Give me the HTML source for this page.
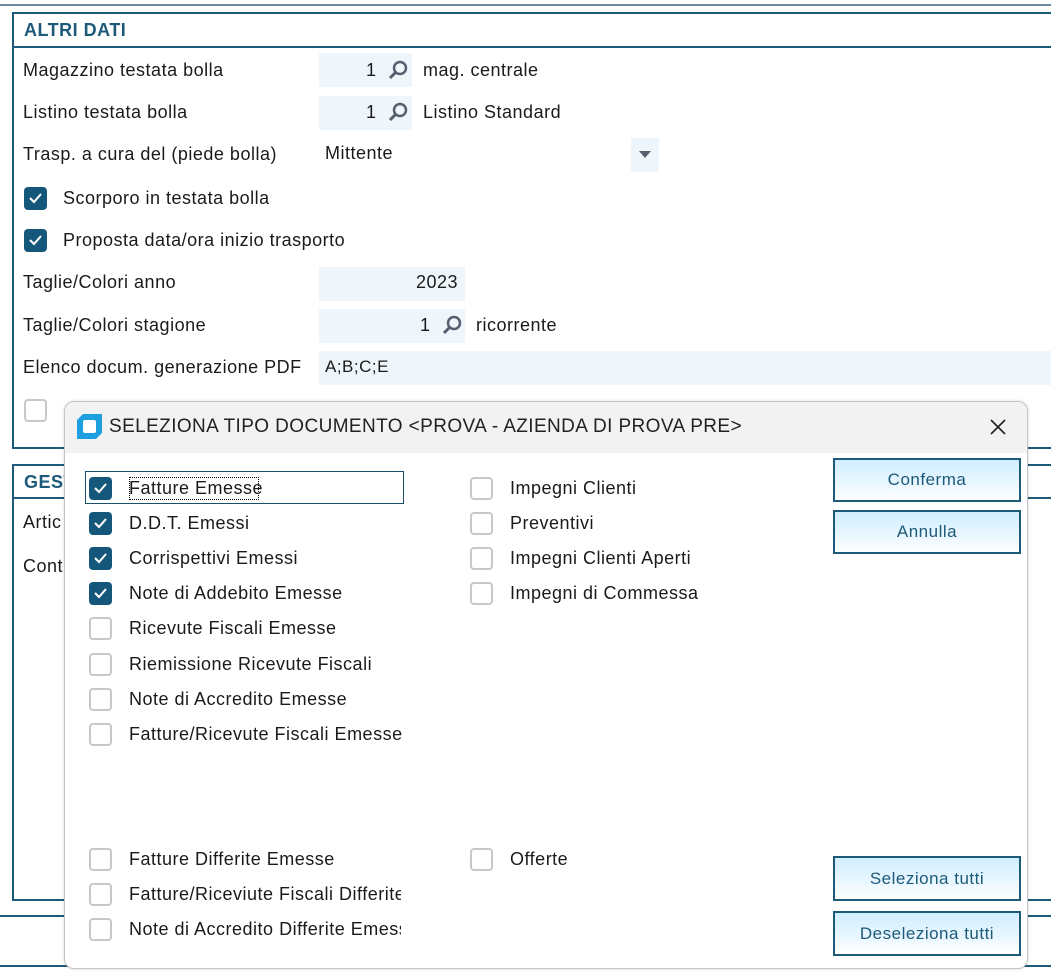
<!DOCTYPE html>
<html><head><meta charset="utf-8"><style>
*{box-sizing:border-box;margin:0;padding:0}
body{width:1051px;height:976px;background:#fff;font-family:"Liberation Sans","DejaVu Sans",sans-serif;font-size:18px;letter-spacing:0.5px;color:#1a1a1a;position:relative;overflow:hidden}
.a{position:absolute;white-space:nowrap}
.hl{position:absolute;height:2px;background:#1d5a7a}
.fld{position:absolute;background:#eef6fc}
.cb{position:absolute;width:23px;height:23px;border-radius:4px}
.on{background:#15577a}
.off{border:2px solid #c8c8c8;background:#fff}
.on svg{position:absolute;left:4px;top:5px}
.btn{position:absolute;left:833px;width:188px;border:2px solid #1d5a7a;background:linear-gradient(#cfeeff,#eaf7ff 60%,#fff);color:#1d5a7a;text-align:center;font-size:17px}
.mag{position:absolute}
</style></head><body>
<div class="a" style="left:0;top:4px;width:1051px;height:2px;background:#6d8aa3"></div>
<div class="a" style="left:12px;top:12px;width:1045px;height:437px;border:2px solid #1d5a7a"></div>
<div class="hl" style="left:12px;top:46px;width:1039px"></div>
<div class="a" style="left:24px;top:20px;font-weight:bold;color:#1d5a7a;font-size:18px">ALTRI DATI</div>
<div class="a" style="left:23px;top:60px">Magazzino testata bolla</div>
<div class="fld" style="left:319px;top:53px;width:93px;height:34px"></div>
<div class="a" style="left:366px;top:60px">1</div>
<svg class="mag" style="left:387px;top:60px" width="22" height="22" viewBox="0 0 22 22"><circle cx="13" cy="8" r="6" fill="none" stroke="#555f6d" stroke-width="2.5"/><path d="M8.5 12.5L3 18" stroke="#555f6d" stroke-width="3"/></svg>
<div class="a" style="left:423px;top:60px">mag. centrale</div>
<div class="a" style="left:23px;top:102px">Listino testata bolla</div>
<div class="fld" style="left:319px;top:96px;width:93px;height:34px"></div>
<div class="a" style="left:366px;top:102px">1</div>
<svg class="mag" style="left:387px;top:102px" width="22" height="22" viewBox="0 0 22 22"><circle cx="13" cy="8" r="6" fill="none" stroke="#555f6d" stroke-width="2.5"/><path d="M8.5 12.5L3 18" stroke="#555f6d" stroke-width="3"/></svg>
<div class="a" style="left:423px;top:102px">Listino Standard</div>
<div class="a" style="left:23px;top:144px">Trasp. a cura del (piede bolla)</div>
<div class="a" style="left:325px;top:143px">Mittente</div>
<div class="fld" style="left:631px;top:138px;width:28px;height:34px"></div>
<div class="a" style="left:639px;top:151px;width:0;height:0;border-left:6px solid transparent;border-right:6px solid transparent;border-top:7px solid #555f6d"></div>
<div class="cb on" style="left:24px;top:187px"><svg width="15" height="12"><path d="M2 6l4 4 7-8" fill="none" stroke="#fff" stroke-width="2"/></svg></div>
<div class="a" style="left:63px;top:188px">Scorporo in testata bolla</div>
<div class="cb on" style="left:24px;top:229px"><svg width="15" height="12"><path d="M2 6l4 4 7-8" fill="none" stroke="#fff" stroke-width="2"/></svg></div>
<div class="a" style="left:63px;top:230px">Proposta data/ora inizio trasporto</div>
<div class="a" style="left:23px;top:272px">Taglie/Colori anno</div>
<div class="fld" style="left:319px;top:267px;width:146px;height:34px"></div>
<div class="a" style="left:416px;top:272px">2023</div>
<div class="a" style="left:23px;top:315px">Taglie/Colori stagione</div>
<div class="fld" style="left:319px;top:309px;width:146px;height:34px"></div>
<div class="a" style="left:420px;top:315px">1</div>
<svg class="mag" style="left:441px;top:315px" width="22" height="22" viewBox="0 0 22 22"><circle cx="13" cy="8" r="6" fill="none" stroke="#555f6d" stroke-width="2.5"/><path d="M8.5 12.5L3 18" stroke="#555f6d" stroke-width="3"/></svg>
<div class="a" style="left:476px;top:315px">ricorrente</div>
<div class="a" style="left:23px;top:357px">Elenco docum. generazione PDF</div>
<div class="fld" style="left:319px;top:351px;width:732px;height:34px"></div>
<div class="a" style="left:325px;top:357px;font-size:17px">A;B;C;E</div>
<div class="cb off" style="left:24px;top:399px"></div>
<div class="a" style="left:12px;top:464px;width:1045px;height:437px;border:2px solid #1d5a7a"></div>
<div class="hl" style="left:12px;top:497px;width:1039px"></div>
<div class="a" style="left:24px;top:472px;font-weight:bold;color:#1d5a7a;font-size:18px">GEST</div>
<div class="a" style="left:23px;top:512px">Artic</div>
<div class="a" style="left:23px;top:556px">Cont</div>
<div class="hl" style="left:0;top:915px;width:1051px"></div>
<div class="hl" style="left:0;top:965px;width:1051px"></div>
<div class="a" style="left:64px;top:401px;width:964px;height:568px;border:1px solid #c4c4c4;border-radius:10px;background:#fff;overflow:hidden;box-shadow:0 0 3px rgba(0,0,0,.15)">
 <div style="height:51px;background:#f2f2f2"></div>
</div>
<svg class="a" style="left:76px;top:413px" width="27" height="27" viewBox="0 0 27 27"><path d="M7 1h19v19l-6 6H1V7z" fill="#1ea0e0"/><rect x="7" y="7" width="13" height="13" rx="2" fill="#fff"/></svg>
<div class="a" style="left:109px;top:416px;font-size:19px;letter-spacing:0.4px;color:#222">SELEZIONA TIPO DOCUMENTO &lt;PROVA - AZIENDA DI PROVA PRE&gt;</div>
<svg class="a" style="left:989px;top:418px" width="18" height="18"><path d="M2 2l14 14M16 2L2 16" stroke="#222" stroke-width="1.6"/></svg>
<div class="a" style="left:85px;top:471px;width:319px;height:33px;border:1.5px solid #1d4f6a"></div>
<div class="a" style="left:129px;top:477px;height:23px;border:1px dotted #000;width:130px"></div>

<div class="cb on" style="left:89px;top:477px"><svg width="15" height="12"><path d="M2 6l4 4 7-8" fill="none" stroke="#fff" stroke-width="2"/></svg></div>
<div class="a" style="left:129px;top:478px">Fatture Emesse</div>
<div class="cb on" style="left:89px;top:512px"><svg width="15" height="12"><path d="M2 6l4 4 7-8" fill="none" stroke="#fff" stroke-width="2"/></svg></div>
<div class="a" style="left:129px;top:513px">D.D.T. Emessi</div>
<div class="cb on" style="left:89px;top:547px"><svg width="15" height="12"><path d="M2 6l4 4 7-8" fill="none" stroke="#fff" stroke-width="2"/></svg></div>
<div class="a" style="left:129px;top:548px">Corrispettivi Emessi</div>
<div class="cb on" style="left:89px;top:582px"><svg width="15" height="12"><path d="M2 6l4 4 7-8" fill="none" stroke="#fff" stroke-width="2"/></svg></div>
<div class="a" style="left:129px;top:583px">Note di Addebito Emesse</div>
<div class="cb off" style="left:89px;top:617px"></div><div class="a" style="left:129px;top:618px">Ricevute Fiscali Emesse</div>
<div class="cb off" style="left:89px;top:653px"></div><div class="a" style="left:129px;top:654px">Riemissione Ricevute Fiscali</div>
<div class="cb off" style="left:89px;top:688px"></div><div class="a" style="left:129px;top:689px">Note di Accredito Emesse</div>
<div class="cb off" style="left:89px;top:723px"></div><div class="a" style="left:129px;top:724px">Fatture/Ricevute Fiscali Emesse</div>

<div class="cb off" style="left:470px;top:477px"></div><div class="a" style="left:510px;top:478px">Impegni Clienti</div>
<div class="cb off" style="left:470px;top:512px"></div><div class="a" style="left:510px;top:513px">Preventivi</div>
<div class="cb off" style="left:470px;top:547px"></div><div class="a" style="left:510px;top:548px">Impegni Clienti Aperti</div>
<div class="cb off" style="left:470px;top:582px"></div><div class="a" style="left:510px;top:583px">Impegni di Commessa</div>

<div class="cb off" style="left:89px;top:848px"></div><div class="a" style="left:129px;top:849px">Fatture Differite Emesse</div>
<div class="cb off" style="left:89px;top:883px"></div><div class="a" style="left:129px;top:884px;width:272px;overflow:hidden">Fatture/Riceviute Fiscali Differite</div>
<div class="cb off" style="left:89px;top:918px"></div><div class="a" style="left:129px;top:919px;width:272px;overflow:hidden">Note di Accredito Differite Emesse</div>
<div class="cb off" style="left:470px;top:848px"></div><div class="a" style="left:510px;top:849px">Offerte</div>

<div class="btn" style="top:458px;height:44px;line-height:40px">Conferma</div>
<div class="btn" style="top:510px;height:44px;line-height:40px">Annulla</div>
<div class="btn" style="top:856px;height:45px;line-height:41px">Seleziona tutti</div>
<div class="btn" style="top:911px;height:45px;line-height:41px">Deseleziona tutti</div>
</body></html>
